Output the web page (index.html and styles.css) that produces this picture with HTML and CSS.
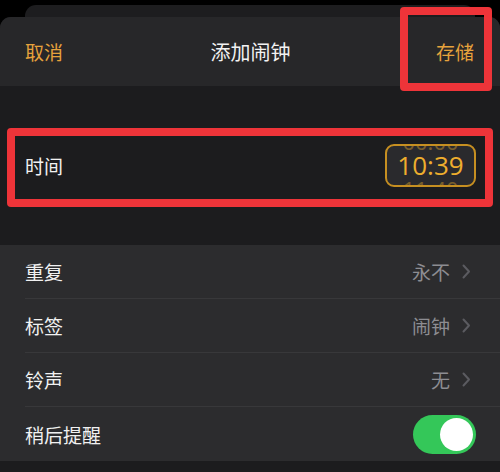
FILE: index.html
```html
<!DOCTYPE html>
<html lang="zh-CN">
<head>
    <meta charset="UTF-8">
    <meta name="viewport" content="width=device-width, initial-scale=1.0">
    <title>添加闹钟</title>
    <link rel="stylesheet" href="styles.css">
</head>
<body>
    <div class="back-sheet"></div>
    <div class="sheet">
        <!-- Nav bar -->
        <div class="nav">
            <span class="nav-btn">取消</span>
            <span class="nav-title">添加闹钟</span>
            <span class="nav-btn">存储</span>
            <div class="mark mark-save"></div>
        </div>

        <!-- Time -->
        <div class="time-section">
            <div class="time-row">
                <span class="label">时间</span>
                <div class="time-pill">
                    <span class="wheel">00:00</span>
                    <span class="time-value">10:39</span>
                    <span class="wheel">11:40</span>
                </div>
            </div>
            <div class="mark mark-time"></div>
        </div>

        <!-- Options -->
        <div class="list">
            <div class="row">
                <div class="row-inner">
                    <span class="label">重复</span>
                    <span class="value">永不</span>
                    <svg class="chevron" width="9" height="15" viewBox="0 0 9 15"><path d="M1.5 1.5 L7 7.5 L1.5 13.5" fill="none" stroke="#5b5b60" stroke-width="2" stroke-linecap="round" stroke-linejoin="round"/></svg>
                </div>
            </div>
            <div class="row">
                <div class="row-inner">
                    <span class="label">标签</span>
                    <span class="value">闹钟</span>
                    <svg class="chevron" width="9" height="15" viewBox="0 0 9 15"><path d="M1.5 1.5 L7 7.5 L1.5 13.5" fill="none" stroke="#5b5b60" stroke-width="2" stroke-linecap="round" stroke-linejoin="round"/></svg>
                </div>
            </div>
            <div class="row">
                <div class="row-inner">
                    <span class="label">铃声</span>
                    <span class="value">无</span>
                    <svg class="chevron" width="9" height="15" viewBox="0 0 9 15"><path d="M1.5 1.5 L7 7.5 L1.5 13.5" fill="none" stroke="#5b5b60" stroke-width="2" stroke-linecap="round" stroke-linejoin="round"/></svg>
                </div>
            </div>
            <div class="row">
                <div class="row-inner last">
                    <span class="label">稍后提醒</span>
                    <div class="toggle"><div class="knob"></div></div>
                </div>
            </div>
        </div>
        <div class="bottom"></div>
    </div>
</body>
</html>
```

FILE: styles.css
```css
body {
    margin: 0;
    padding-top: 5px;
    background-color: #000;
    font-family: 'Noto Sans CJK SC', 'Noto Sans', sans-serif;
    overflow: hidden;
}
.back-sheet {
    height: 12px;
    margin: 0 25px;
    background-color: #1d1d1f;
    border-radius: 11px 11px 0 0;
}
.sheet {
    background-color: #1c1c1e;
    border-radius: 11px 11px 0 0;
}
.nav {
    position: relative;
    height: 69px;
    padding: 0 26px 0 25px;
    background-color: #272729;
    border-radius: 11px 11px 0 0;
    display: flex;
    justify-content: space-between;
    align-items: center;
}
.nav-btn {
    color: #e6a23c;
    font-size: 19px;
}
.nav-title {
    color: #f2f2f2;
    font-size: 20px;
    margin-left: 2px;
}
.mark {
    position: absolute;
    border: 8px solid #ee3439;
    border-radius: 4px;
}
.mark-save {
    left: 400px;
    top: -10px;
    width: 76px;
    height: 68px;
}
.time-section {
    position: relative;
    padding: 51px 0 47px;
}
.time-row {
    height: 61px;
    box-sizing: border-box;
    padding: 0 24px 5px 25px;
    display: flex;
    justify-content: space-between;
    align-items: center;
}
.mark-time {
    left: 7px;
    top: 42px;
    width: 470px;
    height: 63px;
}
.label {
    color: #f1f1f1;
    font-size: 19px;
}
.time-pill {
    width: 87px;
    height: 39px;
    border: 2px solid #c68f21;
    border-radius: 9px;
    background-color: #2a2a2d;
    display: flex;
    flex-direction: column;
    align-items: center;
    justify-content: center;
    overflow: hidden;
}
.time-value,
.wheel {
    flex-shrink: 0;
    font-family: 'Open Sans', 'Liberation Sans', sans-serif;
    color: #eeae2e;
}
.time-value {
    font-size: 26px;
    line-height: 26px;
}
.wheel {
    font-size: 22px;
    line-height: 22px;
    opacity: 0.4;
}
.list {
    background-color: #2c2c2e;
}
.row {
    padding-left: 25px;
}
.row-inner {
    height: 54px;
    box-sizing: border-box;
    padding-right: 29px;
    border-bottom: 1px solid #38383a;
    display: flex;
    align-items: center;
}
.row-inner.last {
    border-bottom: none;
    padding-right: 24px;
}
.row-inner .label {
    flex: 1;
}
.value {
    color: #8d8d92;
    font-size: 19px;
    margin-right: 12px;
}
.toggle {
    width: 63px;
    height: 39px;
    border-radius: 20px;
    background-color: #34c759;
    display: flex;
    align-items: center;
    justify-content: flex-end;
    padding: 0 3px;
    box-sizing: border-box;
}
.knob {
    width: 33px;
    height: 33px;
    border-radius: 50%;
    background-color: #fff;
}
.bottom {
    height: 20px;
    background-color: #1c1c1e;
}
```
